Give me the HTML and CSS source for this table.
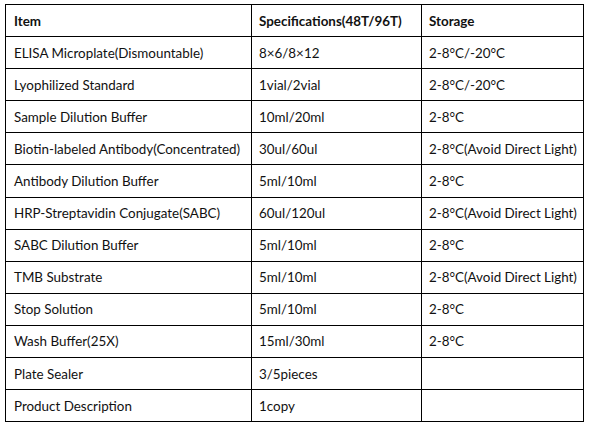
FILE: index.html
```html
<!DOCTYPE html>
<html>
<head>
<meta charset="utf-8">
<link rel="stylesheet" href="styles.css">
</head>
<body>
<table class="kit">
  <colgroup>
    <col class="c1"><col class="c2"><col class="c3">
  </colgroup>
  <thead>
    <tr><th class="first">Item</th><th>Specifications(48T/96T)</th><th>Storage</th></tr>
  </thead>
  <tbody>
    <tr><td class="first">ELISA Microplate(Dismountable)</td><td>8×6/8×12</td><td>2-8°C/-20°C</td></tr>
    <tr><td class="first">Lyophilized Standard</td><td>1vial/2vial</td><td>2-8°C/-20°C</td></tr>
    <tr><td class="first">Sample Dilution Buffer</td><td>10ml/20ml</td><td>2-8°C</td></tr>
    <tr><td class="first">Biotin-labeled Antibody(Concentrated)</td><td>30ul/60ul</td><td>2-8°C(Avoid Direct Light)</td></tr>
    <tr><td class="first">Antibody Dilution Buffer</td><td>5ml/10ml</td><td>2-8°C</td></tr>
    <tr><td class="first">HRP-Streptavidin Conjugate(SABC)</td><td>60ul/120ul</td><td>2-8°C(Avoid Direct Light)</td></tr>
    <tr><td class="first">SABC Dilution Buffer</td><td>5ml/10ml</td><td>2-8°C</td></tr>
    <tr><td class="first">TMB Substrate</td><td>5ml/10ml</td><td>2-8°C(Avoid Direct Light)</td></tr>
    <tr><td class="first">Stop Solution</td><td>5ml/10ml</td><td>2-8°C</td></tr>
    <tr><td class="first">Wash Buffer(25X)</td><td>15ml/30ml</td><td>2-8°C</td></tr>
    <tr><td class="first">Plate Sealer</td><td>3/5pieces</td><td></td></tr>
    <tr><td class="first">Product Description</td><td>1copy</td><td></td></tr>
  </tbody>
</table>
</body>
</html>
```
FILE: styles.css
```css
html, body {
  margin: 0;
  padding: 0;
  background: #ffffff;
}
body {
  padding: 4px 0 0 5px;
  font-family: Lato, "Liberation Sans", sans-serif;
  font-size: 13.4px;
  color: #111111;
}
.kit {
  border-collapse: collapse;
  table-layout: fixed;
  width: 578px;
}
.c1 { width: 246px; }
.c2 { width: 170px; }
.c3 { width: 162px; }
.kit th, .kit td {
  border: 1px solid #000000;
  height: 31px;
  padding: 0 0 0 7px;
  text-align: left;
  vertical-align: middle;
  white-space: nowrap;
  font-weight: 400;
  box-sizing: border-box;
}
.kit th {
  font-weight: 700;
}
.kit .first {
  padding-left: 8px;
}
.kit tr {
  height: 32.1px;
}
```
